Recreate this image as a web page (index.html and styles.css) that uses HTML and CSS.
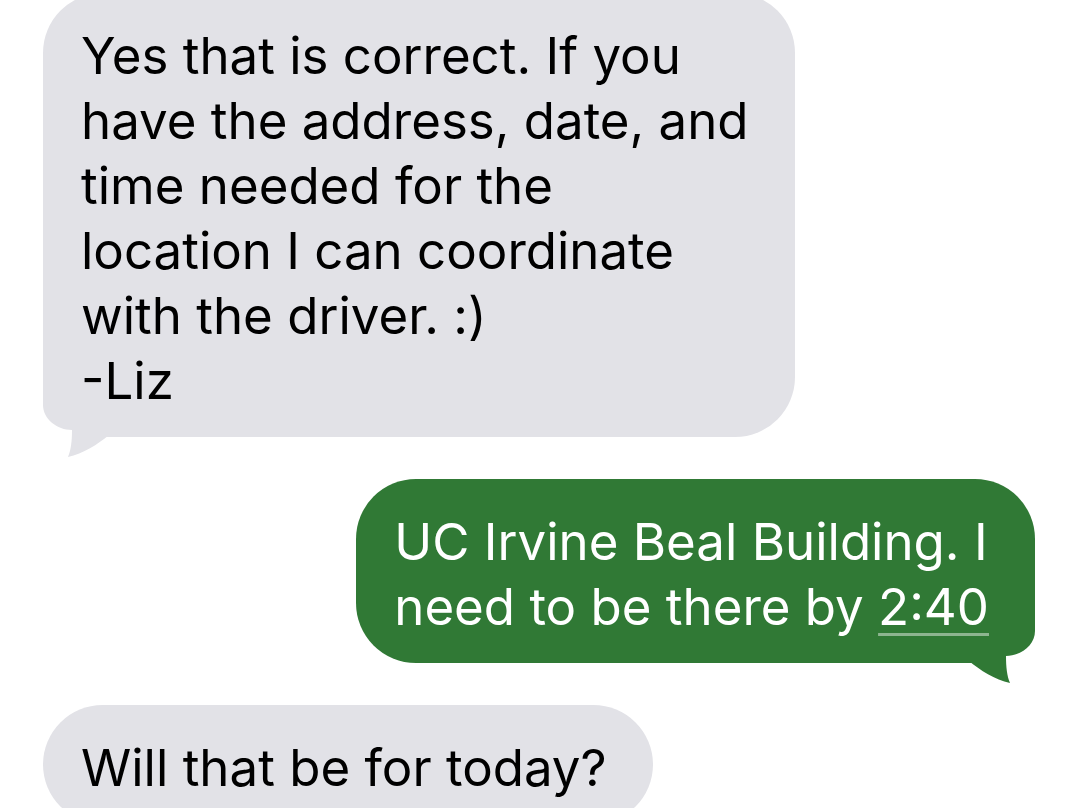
FILE: index.html
```html
<!DOCTYPE html>
<html lang="en">
<head>
  <meta charset="UTF-8" />
  <title>Messages</title>
  <link rel="stylesheet" href="styles.css">
</head>
<body>
  <div class="thread">
    <!-- Incoming -->
    <div class="bubble in first">
      Yes that is correct. If you<br>
      have the address, date, and<br>
      time needed for the<br>
      location I can coordinate<br>
      with the driver. :)<br>
      -Liz
      <svg class="tail" viewBox="0 0 70 84" width="70" height="84">
        <path d="M0 0 V30 C0 44 14 55 29 55 C29 66 28 75 25 82 C40 79 55 69 66 60 V0 Z" />
      </svg>
    </div>

    <!-- Outgoing -->
    <div class="bubble out">
      UC Irvine Beal Building. I<br>
      need to be there by <span class="time">2:40</span>
      <svg class="tail" viewBox="0 0 70 84" width="70" height="84">
        <path d="M0 0 V30 C0 44 14 55 29 55 C29 66 28 75 25 82 C40 79 55 69 66 60 V0 Z" />
      </svg>
    </div>

    <!-- Incoming -->
    <div class="bubble in">
      Will that be for today?
    </div>
  </div>
</body>
</html>
```

FILE: styles.css
```css
body {
  margin: 0;
  background-color: #fff;
  font-family: 'Inter', 'Roboto', sans-serif;
  overflow: hidden;
}
.thread {
  display: flex;
  flex-direction: column;
  gap: 42px;
  padding: 0 45px 0 43px;
  margin-top: -7px;
}
.bubble {
  position: relative;
  z-index: 0;
  width: fit-content;
  padding: 30px 46px 24px 38px;
  font-size: 51px;
  line-height: 65px;
  border-radius: 60px;
}
.bubble.in {
  align-self: flex-start;
  background-color: #e2e2e7;
  color: #000;
}
.bubble.out {
  align-self: flex-end;
  background-color: #307935;
  color: #fff;
}
.tail {
  position: absolute;
  z-index: -1;
  bottom: -22px;
}
.in .tail {
  left: 0;
  fill: #e2e2e7;
}
.out .tail {
  right: 0;
  fill: #307935;
  transform: scaleX(-1);
}
.time {
  text-decoration: underline;
  text-decoration-color: rgba(255, 255, 255, 0.45);
  text-decoration-thickness: 3px;
  text-underline-offset: 8px;
}
```
